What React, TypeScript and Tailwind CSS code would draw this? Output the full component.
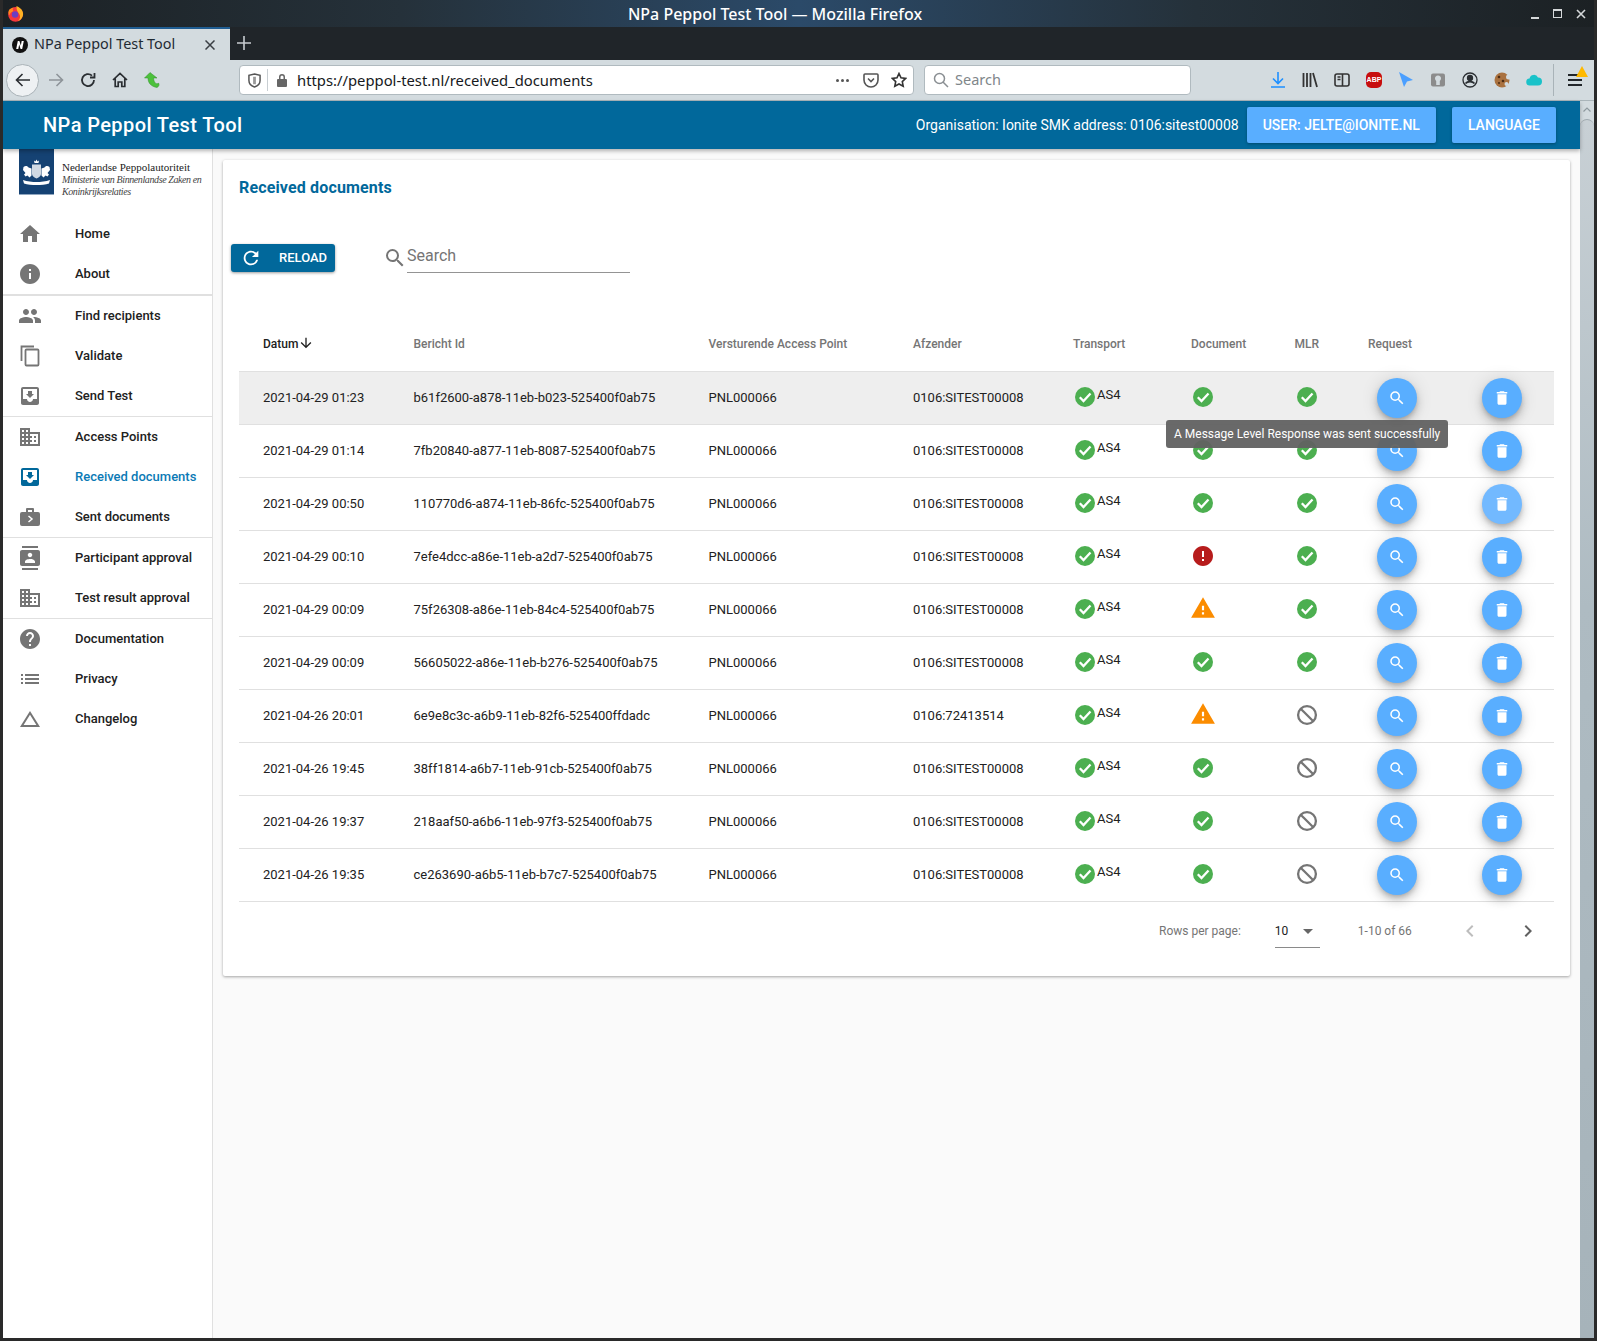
import {
  MdArrowDownward,
  MdArrowDropDown,
  MdBusiness,
  MdChangeHistory,
  MdChevronLeft,
  MdChevronRight,
  MdContacts,
  MdDelete,
  MdError,
  MdHelp,
  MdHome,
  MdInfo,
  MdList,
  MdMoveToInbox,
  MdPeople,
  MdRefresh,
  MdSearch,
  MdWarning,
} from "react-icons/md";
import type { ReactNode } from "react";

const roboto = "font-['Roboto',sans-serif]";

type NavItem = { label: string; icon: ReactNode; active?: boolean };

function SentIcon() {
  return (
    <svg viewBox="0 0 24 24" width="24" height="24" fill="currentColor">
      <path d="M9 3h6a1 1 0 0 1 1 1v3h4a2 2 0 0 1 2 2v10a2 2 0 0 1-2 2H4a2 2 0 0 1-2-2V9a2 2 0 0 1 2-2h4V4a1 1 0 0 1 1-1zm1 2v2h4V5h-4z" />
      <path d="M10.5 11l3.5 3-3.5 3" fill="none" stroke="#fff" strokeWidth="1.5" />
    </svg>
  );
}

function CopyIcon() {
  return (
    <svg viewBox="0 0 24 24" width="24" height="24" fill="none" stroke="currentColor" strokeWidth="1.8">
      <rect x="7.5" y="5.5" width="13" height="16" rx="1" />
      <path d="M3.5 17V2.500H16" />
    </svg>
  );
}

const navGroups: NavItem[][] = [
  [
    { label: "Home", icon: <MdHome size={24} /> },
    { label: "About", icon: <MdInfo size={24} /> },
  ],
  [
    { label: "Find recipients", icon: <MdPeople size={24} /> },
    { label: "Validate", icon: <CopyIcon /> },
    { label: "Send Test", icon: <MdMoveToInbox size={24} /> },
  ],
  [
    { label: "Access Points", icon: <MdBusiness size={24} /> },
    { label: "Received documents", icon: <MdMoveToInbox size={24} />, active: true },
    { label: "Sent documents", icon: <SentIcon /> },
  ],
  [
    { label: "Participant approval", icon: <MdContacts size={24} /> },
    { label: "Test result approval", icon: <MdBusiness size={24} /> },
  ],
  [
    { label: "Documentation", icon: <MdHelp size={24} /> },
    { label: "Privacy", icon: <MdList size={24} /> },
    { label: "Changelog", icon: <MdChangeHistory size={24} /> },
  ],
];

type Status = "ok" | "warn" | "error" | "none";

const rows: { date: string; id: string; sender: string; doc: Status; mlr: Status }[] = [
  { date: "2021-04-29 01:23", id: "b61f2600-a878-11eb-b023-525400f0ab75", sender: "0106:SITEST00008", doc: "ok", mlr: "ok" },
  { date: "2021-04-29 01:14", id: "7fb20840-a877-11eb-8087-525400f0ab75", sender: "0106:SITEST00008", doc: "ok", mlr: "ok" },
  { date: "2021-04-29 00:50", id: "110770d6-a874-11eb-86fc-525400f0ab75", sender: "0106:SITEST00008", doc: "ok", mlr: "ok" },
  { date: "2021-04-29 00:10", id: "7efe4dcc-a86e-11eb-a2d7-525400f0ab75", sender: "0106:SITEST00008", doc: "error", mlr: "ok" },
  { date: "2021-04-29 00:09", id: "75f26308-a86e-11eb-84c4-525400f0ab75", sender: "0106:SITEST00008", doc: "warn", mlr: "ok" },
  { date: "2021-04-29 00:09", id: "56605022-a86e-11eb-b276-525400f0ab75", sender: "0106:SITEST00008", doc: "ok", mlr: "ok" },
  { date: "2021-04-26 20:01", id: "6e9e8c3c-a6b9-11eb-82f6-525400ffdadc", sender: "0106:72413514", doc: "warn", mlr: "none" },
  { date: "2021-04-26 19:45", id: "38ff1814-a6b7-11eb-91cb-525400f0ab75", sender: "0106:SITEST00008", doc: "ok", mlr: "none" },
  { date: "2021-04-26 19:37", id: "218aaf50-a6b6-11eb-97f3-525400f0ab75", sender: "0106:SITEST00008", doc: "ok", mlr: "none" },
  { date: "2021-04-26 19:35", id: "ce263690-a6b5-11eb-b7c7-525400f0ab75", sender: "0106:SITEST00008", doc: "ok", mlr: "none" },
];

function CheckIcon() {
  return (
    <svg viewBox="0 0 24 24" width="24" height="24" className="mb-[2px]">
      <circle cx="12" cy="12" r="10" fill="#4caf50" />
      <path d="M6.800 12.300l3.700 3.700 7-7.500" fill="none" stroke="#fff" strokeWidth="2.300" />
    </svg>
  );
}

function BanIcon() {
  return (
    <svg viewBox="0 0 24 24" width="24" height="24" fill="none" stroke="#757575" strokeWidth="2.300" className="mb-[2px]">
      <circle cx="12" cy="12" r="8.900" />
      <path d="M5.700 5.700l12.600 12.600" />
    </svg>
  );
}

function StatusIcon({ status }: { status: Status }) {
  if (status === "ok") return <CheckIcon />;
  if (status === "error") return <MdError size={24} className="mb-[2px] text-[#b71c1c]" />;
  if (status === "warn") return <MdWarning size={26} className="-mx-px mb-[4px] text-[#fb8c00]" />;
  return <BanIcon />;
}

function Fab({ children, light }: { children: ReactNode; light?: boolean }) {
  return (
    <div
      className={`flex h-10 w-10 items-center justify-center rounded-full text-white shadow-[0_3px_5px_-1px_rgba(0,0,0,0.2),0_6px_10px_0_rgba(0,0,0,0.14),0_1px_18px_0_rgba(0,0,0,0.12)] ${
        light ? "bg-[#72b9ff]" : "bg-[#59aeff]"
      }`}
    >
      {children}
    </div>
  );
}

const gridCols = "grid grid-cols-[150.5px_295px_204.5px_160px_118px_103.5px_73.5px_114px_40px] items-center pl-6";

function FirefoxLogo() {
  return (
    <svg viewBox="0 0 18 18" width="17" height="17">
      <circle cx="9" cy="10" r="7.800" fill="#f4373c" />
      <path d="M10 1c5 2 7.500 5.500 7 9.500-.5 3-2.500 5.500-5.500 6.500 2.500-2 3-5 1.500-7.500S10 6 10 1z" fill="#ffb224" />
      <path d="M2 5.500C3 4 5 3 7 3 5.500 4.500 6 6 7 6.500 4.500 7 3 8.500 2.500 11 1.500 9 1.300 7 2 5.500z" fill="#ff8a1c" />
      <circle cx="8.500" cy="10" r="3.400" fill="#6b3fc2" />
    </svg>
  );
}

function TabIcon() {
  return (
    <svg viewBox="0 0 16 16" width="16" height="16">
      <circle cx="8" cy="8" r="8" fill="#111" />
      <path d="M4.200 12l1.600-8h1.600l1.400 4.400L9.700 4h2.100l-1.600 8H8.600L7.200 7.600 6.300 12z" fill="#fff" />
    </svg>
  );
}

function BrowserChrome() {
  return (
    <div className="shrink-0">
      {/* title bar */}
      <div className="relative flex h-[27px] items-center justify-center bg-[linear-gradient(90deg,#1c2124_0%,#25313a_25%,#2b4a69_50%,#25313a_75%,#1c2124_100%)] text-white">
        <span className="absolute left-[4px] top-[5px]">
          <FirefoxLogo />
        </span>
        <span className="pr-[47px] font-['Noto_Sans',sans-serif] text-[16px] font-medium">
          NPa Peppol Test Tool — Mozilla Firefox
        </span>
        <div className="absolute right-[8px] top-[8px] flex items-center gap-[14px] text-[#d5d8da]">
          <span className="mt-[9px] block h-[2px] w-[8px] bg-current" />
          <span className="block h-[9px] w-[9px] border border-t-2 border-current" />
          <svg viewBox="0 0 10 10" width="10" height="10" stroke="currentColor" strokeWidth="1.6">
            <path d="M1 1l8 8M9 1l-8 8" />
          </svg>
        </div>
      </div>
      {/* tab strip */}
      <div className="flex h-[33px] bg-[#202529]">
        <div className="flex w-[227px] items-center border-t-2 border-[#1f5d92] bg-[#d3dbdf] pl-[9px] pr-[15px]">
          <TabIcon />
          <span className="ml-[6px] flex-1 font-['Noto_Sans',sans-serif] text-[14.4px] leading-none text-[#1f2a33]">
            NPa Peppol Test Tool
          </span>
          <svg viewBox="0 0 10 10" width="10" height="10" stroke="#3a3f44" strokeWidth="1.5">
            <path d="M0.500 0.500l9 9M9.500 0.500l-9 9" />
          </svg>
        </div>
        <svg viewBox="0 0 14 14" width="14" height="14" stroke="#c7ccd0" strokeWidth="1.6" className="ml-[7px] mt-[9px]">
          <path d="M7 0v14M0 7h14" />
        </svg>
      </div>
      {/* toolbar */}
      <div className="flex h-[41px] items-center border-b border-[#aab5ba] bg-[#d3dbdf] pl-[3px] pr-[3px]">
        <div className="flex h-[33px] w-[33px] items-center justify-center rounded-full border border-[#a9b2b7] bg-[#eef1f3]">
          <svg viewBox="0 0 16 16" width="16" height="16" fill="none" stroke="#2a2e32" strokeWidth="1.6">
            <path d="M15 8H1.500M7.500 2L1.500 8l6 6" />
          </svg>
        </div>
        <svg viewBox="0 0 16 16" width="16" height="16" fill="none" stroke="#8e9499" strokeWidth="1.6" className="ml-[9px]">
          <path d="M1 8h13.500M8.500 2l6 6-6 6" />
        </svg>
        <svg viewBox="0 0 16 16" width="16" height="16" fill="none" stroke="#2a2e32" strokeWidth="1.8" className="ml-[16px]">
          <path d="M14 8a6 6 0 1 1-2-4.400" />
          <path d="M14.500 1v4.500H10" />
        </svg>
        <svg viewBox="0 0 16 16" width="16" height="16" fill="none" stroke="#2a2e32" strokeWidth="1.7" className="ml-[16px]">
          <path d="M1 8l7-6.500L15 8M3.200 6.500V14.500h3V10h3.600v4.500h3V6.500" />
        </svg>
        <svg viewBox="0 0 16 16" width="16" height="16" className="ml-[16px]">
          <path d="M6 0.500L0.500 6h3.500c0 5 3 8.500 9 9.500 2-1 2.500-3 1.500-4.500-1 1.500-4.500 1-5-5h3.500z" fill="#4cc13c" stroke="#2f8d2a" strokeWidth="0.5" />
        </svg>
        {/* address bar */}
        <div className="ml-[79px] flex h-[30px] w-[675px] items-center rounded-[4px] border border-[#b0babf] bg-white pl-[8px] pr-[6px]">
          <svg viewBox="0 0 14 16" width="13" height="15" fill="none" stroke="#555" strokeWidth="1.6">
            <path d="M7 1l6 1.500V8c0 3.500-3 6-6 7-3-1-6-3.500-6-7V2.500z" />
            <path d="M7 4v8" stroke="#999" strokeWidth="3" />
          </svg>
          <span className="ml-[6px] h-[22px] w-px bg-[#c8ced2]" />
          <svg viewBox="0 0 12 14" width="12" height="14" fill="#666" className="ml-[8px]">
            <path d="M3 6V4a3 3 0 0 1 6 0v2h1a1 1 0 0 1 1 1v6a1 1 0 0 1-1 1H2a1 1 0 0 1-1-1V7a1 1 0 0 1 1-1zm1.500 0h3V4a1.500 1.500 0 0 0-3 0z" />
          </svg>
          <span className="ml-[9px] flex-1 font-['Noto_Sans',sans-serif] text-[14.8px] text-[#16191c]">
            https://peppol-test.nl/received_documents
          </span>
          <span className="flex gap-[2px]">
            <i className="block h-[3px] w-[3px] rounded-full bg-[#555]" />
            <i className="block h-[3px] w-[3px] rounded-full bg-[#555]" />
            <i className="block h-[3px] w-[3px] rounded-full bg-[#555]" />
          </span>
          <svg viewBox="0 0 16 16" width="16" height="16" fill="none" stroke="#555" strokeWidth="1.6" className="ml-[14px]">
            <path d="M2 2h12a1 1 0 0 1 1 1v5a7 7 0 0 1-14 0V3a1 1 0 0 1 1-1z" />
            <path d="M5 6.500l3 3 3-3" />
          </svg>
          <svg viewBox="0 0 16 16" width="16" height="16" fill="none" stroke="#333" strokeWidth="1.6" className="ml-[12px]">
            <path d="M8 1.500l2 4.300 4.700.6-3.400 3.200.9 4.700L8 12l-4.200 2.300.9-4.700L1.300 6.400 6 5.800z" />
          </svg>
        </div>
        {/* search box */}
        <div className="ml-[10px] flex h-[30px] w-[267px] items-center rounded-[4px] border border-[#b0babf] bg-white pl-[8px]">
          <svg viewBox="0 0 16 16" width="16" height="16" fill="none" stroke="#8a8f93" strokeWidth="1.5">
            <circle cx="6.500" cy="6.500" r="5" />
            <path d="M10 10l5 5" />
          </svg>
          <span className="ml-[6px] font-['Noto_Sans',sans-serif] text-[14.5px] text-[#80868a]">Search</span>
        </div>
        {/* extensions */}
        <div className="ml-[71px] flex items-center">
          <span className="flex w-8 justify-center">
            <svg viewBox="0 0 16 16" width="16" height="16" fill="none" stroke="#1e90ff" strokeWidth="1.6">
              <path d="M8 0v11M3 6.500L8 11.500l5-5M1 15h14" />
            </svg>
          </span>
          <span className="flex w-8 justify-center">
            <svg viewBox="0 0 16 16" width="16" height="16" fill="none" stroke="#333" strokeWidth="1.8">
              <path d="M1.500 1v14M5 1v14M8.500 1v14M11 1l4 14" />
            </svg>
          </span>
          <span className="flex w-8 justify-center">
            <svg viewBox="0 0 16 16" width="16" height="16" fill="none" stroke="#333" strokeWidth="1.6">
              <rect x="1" y="2" width="14" height="12" rx="2" />
              <path d="M8.500 2v12M3.500 5h3M3.500 7.500h3" />
            </svg>
          </span>
          <span className="flex w-8 justify-center">
            <span className="flex h-[16px] w-[16px] items-center justify-center rounded-[5px] bg-[#c70d0d] font-['Liberation_Sans',sans-serif] text-[7px] font-bold text-white">
              ABP
            </span>
          </span>
          <span className="flex w-8 justify-center">
            <svg viewBox="0 0 16 16" width="16" height="16" fill="#4b9fff">
              <path d="M1 0l14 8-6 1.500L6 15z" />
            </svg>
          </span>
          <span className="flex w-8 justify-center">
            <svg viewBox="0 0 16 16" width="16" height="16">
              <rect x="1" y="1.500" width="14" height="13" rx="2" fill="#8c8c8c" />
              <path d="M8 3.500c2 0 3 1.400 3 3 0 1.300-.8 1.800-1.200 2.500V13H6.200V9C5.800 8.300 5 7.800 5 6.500c0-1.600 1-3 3-3z" fill="#d3dbdf" />
            </svg>
          </span>
          <span className="flex w-8 justify-center">
            <svg viewBox="0 0 16 16" width="16" height="16" fill="none" stroke="#2a2e32" strokeWidth="1.3">
              <circle cx="8" cy="8" r="7" />
              <circle cx="8" cy="6" r="2.500" fill="#2a2e32" />
              <path d="M3.500 11.500c2-2.500 7-2.500 9 0" strokeWidth="1.800" />
            </svg>
          </span>
          <span className="flex w-8 justify-center">
            <svg viewBox="0 0 16 16" width="16" height="16">
              <circle cx="8" cy="8" r="7.500" fill="#a9713f" />
              <circle cx="5" cy="5" r="1.300" fill="#4d2c13" />
              <circle cx="9" cy="9" r="1.300" fill="#4d2c13" />
              <circle cx="5" cy="11" r="1" fill="#4d2c13" />
              <circle cx="14.500" cy="5" r="2.500" fill="#d3dbdf" />
              <circle cx="12.500" cy="12" r="2" fill="#d3dbdf" />
            </svg>
          </span>
          <span className="flex w-8 justify-center">
            <svg viewBox="0 0 16 12" width="16" height="12" fill="#19c2c9">
              <path d="M4 11.500a3.500 3.500 0 0 1-.5-7 4.500 4.500 0 0 1 8.500-1 3.900 3.900 0 0 1 0 8z" />
            </svg>
          </span>
          <span className="ml-[3px] h-[32px] w-px bg-[#a9b3b8]" />
          <span className="relative ml-[14px] flex h-[12px] w-[14px] flex-col justify-between">
            <i className="block h-[2px] bg-[#22262a]" />
            <i className="block h-[2px] bg-[#22262a]" />
            <i className="block h-[2px] bg-[#22262a]" />
            <svg viewBox="0 0 12 11" width="12" height="11" className="absolute -right-[6px] -top-[8px]">
              <path d="M6 0l6 11H0z" fill="#ffb900" />
            </svg>
          </span>
        </div>
      </div>
    </div>
  );
}

function CoatOfArms() {
  return (
    <svg viewBox="0 0 35 46" width="35" height="46" className="shrink-0">
      <rect width="35" height="46" fill="#154273" />
      <rect y="45" width="35" height="1" fill="#8fa6bf" />
      <g fill="#fff">
        <path d="M15.500 14l-.5-2.500 1.500 1 1-2 1 2 1.500-1-.5 2.500z" />
        <path d="M13 15.500h9v9.500c0 2-2.500 3.500-4.500 4.500-2-1-4.500-2.500-4.500-4.500z" opacity="0.8" />
        <path d="M4.500 18c2-1.500 4-1 5 .5l3 1v7l-2 2-2-2-2 1-1.500-2 1.500-1.500-2.500-3z" />
        <path d="M30.500 18c-2-1.500-4-1-5 .5l-3 1v7l2 2 2-2 2 1 1.500-2-1.500-1.500 2.500-3z" />
        <path d="M4 31c4 1.500 9.500 2 13.500 2s9.500-.5 13.500-2l-1 3.500c-3 1-8.500 1.500-12.500 1.500S8 35.500 5 34.500z" />
      </g>
    </svg>
  );
}

function Sidebar() {
  return (
    <aside className={`flex w-[210px] shrink-0 flex-col border-r border-[#e0e0e0] bg-white ${roboto}`}>
      <div className="mb-[19px] flex h-[46px] pl-[16px]">
        <CoatOfArms />
        <div className="ml-[8px] whitespace-nowrap pt-[12px] font-['Liberation_Serif',serif] text-[10px] leading-[12.5px] tracking-[-0.4px] text-[#222]">
          <div className="text-[11px] tracking-normal">Nederlandse Peppolautoriteit</div>
          <div className="italic text-[#444]">Ministerie van Binnenlandse Zaken en</div>
          <div className="italic text-[#444]">Koninkrijksrelaties</div>
        </div>
      </div>
      {navGroups.map((group, i) => (
        <div key={i} className={i === 0 ? "" : i === 1 ? "border-t-2 border-[#e0e0e0]" : "border-t border-[#e0e0e0]"}>
          {group.map((item) => (
            <div key={item.label} className="flex h-10 items-center">
              <span className={`ml-[15px] flex w-[24px] justify-center ${item.active ? "text-[#01689b]" : "text-[#757575]"}`}>
                {item.icon}
              </span>
              <span className={`ml-[33px] text-[13px] font-medium ${item.active ? "text-[#0b7ab5]" : "text-[#212121]"}`}>
                {item.label}
              </span>
            </div>
          ))}
        </div>
      ))}
    </aside>
  );
}

function TableCard() {
  return (
    <div className={`relative mx-[10px] mt-[11px] h-[816px] rounded-[2px] bg-white shadow-[0_1px_3px_rgba(0,0,0,0.35)] ${roboto}`}>
      <div className="pl-4 pt-[18px] text-[16px] font-bold leading-5 tracking-[0.15px] text-[#01689b]">Received documents</div>
      <div className="ml-2 mt-[46px] flex h-[28px] items-center">
        <div className="flex h-[28px] w-[104px] items-center rounded-[3px] bg-[#01689b] pl-[9px] text-white shadow-[0_1px_3px_rgba(0,0,0,0.4)]">
          <MdRefresh size={22} />
          <span className="ml-[17px] text-[13px] font-medium">RELOAD</span>
        </div>
        <MdSearch size={24} className="ml-[48px] text-[#757575]" />
        <div className="mt-[1px] h-[28px] w-[223px] border-b border-[#949494] text-[16px] leading-[22px] text-[#757575]">
          Search
        </div>
      </div>

      <div className="mx-4 mt-[60px]">
        <div className={`${gridCols} h-[39px] pb-[15px] text-[12px] font-medium text-[#757575]`}>
          <span className="flex items-center text-[#212121]">
            Datum
            <MdArrowDownward size={16} className="-mt-[3px]" />
          </span>
          <span>Bericht Id</span>
          <span>Versturende Access Point</span>
          <span>Afzender</span>
          <span>Transport</span>
          <span>Document</span>
          <span>MLR</span>
          <span>Request</span>
          <span />
        </div>
        {rows.map((r, i) => (
          <div
            key={r.id + i}
            className={`${gridCols} border-b border-[#e0e0e0] text-[13px] text-[#212121] ${
              i === 0 ? "h-[54px] border-t bg-[#eeeeee]" : "h-[53px]"
            }`}
          >
            <span>{r.date}</span>
            <span>{r.id}</span>
            <span>PNL000066</span>
            <span>{r.sender}</span>
            <span className="flex items-center">
              <CheckIcon />
              <span className="-mt-[6px]">AS4</span>
            </span>
            <span className="flex">
              <StatusIcon status={r.doc} />
            </span>
            <span className="flex">
              <StatusIcon status={r.mlr} />
            </span>
            <span className="ml-[9px]">
              <Fab>
                <MdSearch size={18} />
              </Fab>
            </span>
            <span>
              <Fab light={i === 2}>
                <MdDelete size={18} />
              </Fab>
            </span>
          </div>
        ))}
        <div className="flex h-[58px] items-center text-[12px] text-[#757575]">
          <span className="ml-[920px]">Rows per page:</span>
          <span className="ml-[34px] flex h-[34px] w-[45px] items-center justify-between border-b border-[#8a8a8a] text-[#212121]">
            10
            <MdArrowDropDown size={24} className="text-[#666]" />
          </span>
          <span className="ml-[38px]">1-10 of 66</span>
          <MdChevronLeft size={24} className="ml-[46px] text-[#bdbdbd]" />
          <MdChevronRight size={24} className="ml-[34px] text-[#616161]" />
        </div>
      </div>

      {/* tooltip over the first rows */}
      <div className="absolute left-[943px] top-[260px] flex h-[28px] items-center whitespace-nowrap rounded-[3px] bg-[rgba(97,97,97,0.95)] px-2 text-[12px] text-white">
        A Message Level Response was sent successfully
      </div>
    </div>
  );
}

export default function App() {
  return (
    <div className="flex h-screen w-full flex-col overflow-hidden border-x-[3px] border-b-[3px] border-[#2a2a2a] bg-[#fafafa]">
      <BrowserChrome />
      <div className="flex min-h-0 flex-1">
        <div className="flex min-w-0 flex-1 flex-col">
          <header className={`relative z-10 flex h-[48px] shrink-0 items-center bg-[#01689b] pl-10 pr-6 text-white shadow-[0_2px_4px_rgba(0,0,0,0.3)] ${roboto}`}>
            <span className="flex-1 text-[20px] font-medium tracking-[0.4px]">NPa Peppol Test Tool</span>
            <span className="text-[14px]">Organisation: Ionite SMK address: 0106:sitest00008</span>
            <span className="ml-[8px] flex h-9 items-center rounded-[2px] bg-[#59aeff] px-4 text-[14px] font-medium shadow-[0_1px_3px_rgba(0,0,0,0.3)]">
              USER: JELTE@IONITE.NL
            </span>
            <span className="ml-4 flex h-9 items-center rounded-[2px] bg-[#59aeff] px-4 text-[14px] font-medium shadow-[0_1px_3px_rgba(0,0,0,0.3)]">
              LANGUAGE
            </span>
          </header>
          <div className="flex min-h-0 flex-1">
            <Sidebar />
            <main className="min-w-0 flex-1">
              <TableCard />
            </main>
          </div>
        </div>
        {/* scrollbar */}
        <div className="flex w-[14px] shrink-0 flex-col items-center bg-[#d3dbdf]">
          <svg viewBox="0 0 8 5" width="8" height="5" fill="none" stroke="#8f9a9f" strokeWidth="1.2" className="mt-[6px]">
            <path d="M0.500 4.500L4 1l3.500 3.500" />
          </svg>
          <div className="mt-[7px] w-full flex-1 rounded-t-full border-t border-[#9ea9ae] bg-[linear-gradient(180deg,#c8d0d5_0%,#aebbc2_40%,#a6b3ba_100%)]" />
        </div>
      </div>
    </div>
  );
}
